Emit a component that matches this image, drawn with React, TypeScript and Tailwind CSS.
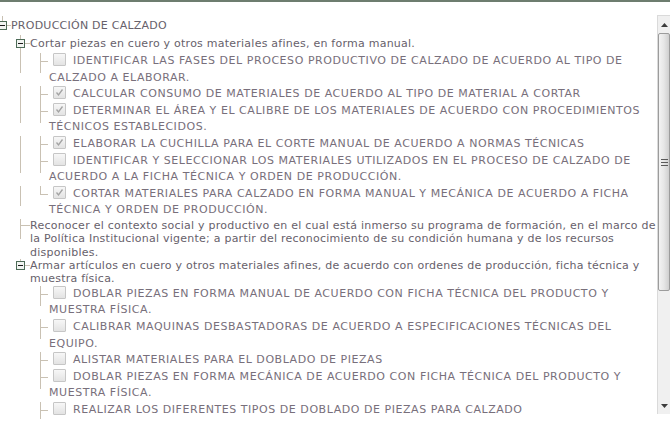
import React from 'react';

const LINE = '#c9c1b3';

type Leaf = { text: string; checked: boolean };

const corteItems: Leaf[] = [
  { text: 'IDENTIFICAR LAS FASES DEL PROCESO PRODUCTIVO DE CALZADO DE ACUERDO AL TIPO DE CALZADO A ELABORAR.', checked: false },
  { text: 'CALCULAR CONSUMO DE MATERIALES DE ACUERDO AL TIPO DE MATERIAL A CORTAR', checked: true },
  { text: 'DETERMINAR EL ÁREA Y EL CALIBRE DE LOS MATERIALES DE ACUERDO CON PROCEDIMIENTOS TÉCNICOS ESTABLECIDOS.', checked: true },
  { text: 'ELABORAR LA CUCHILLA PARA EL CORTE MANUAL DE ACUERDO A NORMAS TÉCNICAS', checked: true },
  { text: 'IDENTIFICAR Y SELECCIONAR LOS MATERIALES UTILIZADOS EN EL PROCESO DE CALZADO DE ACUERDO A LA FICHA TÉCNICA Y ORDEN DE PRODUCCIÓN.', checked: false },
  { text: 'CORTAR MATERIALES PARA CALZADO EN FORMA MANUAL Y MECÁNICA DE ACUERDO A FICHA TÉCNICA Y ORDEN DE PRODUCCIÓN.', checked: true },
];

const armarItems: Leaf[] = [
  { text: 'DOBLAR PIEZAS EN FORMA MANUAL DE ACUERDO CON FICHA TÉCNICA DEL PRODUCTO Y MUESTRA FÍSICA.', checked: false },
  { text: 'CALIBRAR MAQUINAS DESBASTADORAS DE ACUERDO A ESPECIFICACIONES TÉCNICAS DEL EQUIPO.', checked: false },
  { text: 'ALISTAR MATERIALES PARA EL DOBLADO DE PIEZAS', checked: false },
  { text: 'DOBLAR PIEZAS EN FORMA MECÁNICA DE ACUERDO CON FICHA TÉCNICA DEL PRODUCTO Y MUESTRA FÍSICA.', checked: false },
  { text: 'REALIZAR LOS DIFERENTES TIPOS DE DOBLADO DE PIEZAS PARA CALZADO', checked: false },
];

const MinusBox = ({ x, y }: { x: number; y: number }) => (
  <g>
    <rect x={x + 0.5} y={y + 0.5} width="8" height="8" fill="#f1f4f1" stroke="#4d6b57" />
    <line x1={x + 2} y1={y + 4.5} x2={x + 7} y2={y + 4.5} stroke="#1a1a1a" />
  </g>
);

const Checkbox = ({ checked }: { checked: boolean }) => (
  <span className="inline-block w-[13px] h-[13px] ml-[4px] mr-[3px] align-[-2px] border border-[#c6c6c6] rounded-[1px] bg-linear-to-b from-[#f7f7f7] to-[#e3e3e3]">
    {checked && (
      <svg width="11" height="11" viewBox="0 0 11 11" className="block">
        <path d="M2.5 5.5 L4.5 8 L8.5 2.5" fill="none" stroke="#a3a3a3" strokeWidth="1.3" />
      </svg>
    )}
  </span>
);

const LeafRow = ({ item, last, parentHasNext }: { item: Leaf; last: boolean; parentHasNext: boolean }) => (
  <div className="flex items-start">
    <div className="w-[49px] h-0 shrink-0 overflow-visible">
      <svg width="49" height="20" className="block" shapeRendering="crispEdges">
        {parentHasNext && <line x1="20.5" y1="0" x2="20.5" y2="20" stroke={LINE} />}
        <line x1="40.5" y1="0" x2="40.5" y2={last ? 9 : 20} stroke={LINE} />
        <line x1="40" y1="8.5" x2="48" y2="8.5" stroke={LINE} />
      </svg>
    </div>
    <div className="flex-1 leading-[16.6px] tracking-[0.55px] text-[#786f7b]">
      <Checkbox checked={item.checked} /> {item.text}
    </div>
  </div>
);

const Scrollbar = () => (
  <div className="w-[13px] mt-[13px] h-[399px] shrink-0 flex flex-col bg-[#f0f0f0] border-l border-t border-[#dadada]">
    <div className="h-[17px] flex items-center justify-center">
      <svg width="7" height="4" viewBox="0 0 7 4">
        <path d="M0 4 L3.5 0 L7 4 Z" fill="#3c3c3c" />
      </svg>
    </div>
    <div className="h-[258px] border border-[#9c9c9c] rounded-[2px] bg-linear-to-r from-[#f3f3f3] via-[#e6e6e6] to-[#cfcfcf] flex items-center justify-center">
      <svg width="7" height="7" viewBox="0 0 7 7">
        <line x1="0" y1="0.5" x2="7" y2="0.5" stroke="#5a5a5a" />
        <line x1="0" y1="3.5" x2="7" y2="3.5" stroke="#5a5a5a" />
        <line x1="0" y1="6.5" x2="7" y2="6.5" stroke="#5a5a5a" />
      </svg>
    </div>
    <div className="flex-1" />
    <div className="h-[17px] flex items-center justify-center">
      <svg width="7" height="4" viewBox="0 0 7 4">
        <path d="M0 0 L3.5 4 L7 0 Z" fill="#3c3c3c" />
      </svg>
    </div>
  </div>
);

export default function App() {
  return (
    <div className="w-[670px] h-[426px] overflow-hidden bg-white font-['DejaVu_Sans',Verdana,sans-serif] text-[11px] text-[#67616b]">
      <div className="h-[2px] bg-[#6d7d6f]" />
      <div className="flex">
        <div className="flex-1 h-[417px] overflow-hidden pt-[14px] tracking-[0.24px]">
          {/* root */}
          <div className="flex items-start h-[19px]">
            <svg width="11" height="19" className="block shrink-0" shapeRendering="crispEdges">
              <line x1="2.5" y1="0" x2="2.5" y2="5" stroke={LINE} />
              <MinusBox x={-2} y={5} />
              <line x1="7" y1="9.5" x2="11" y2="9.5" stroke={LINE} />
            </svg>
            <span className="leading-[19px]">PRODUCCIÓN DE CALZADO</span>
          </div>

          {/* Cortar piezas */}
          <div className="flex items-start h-[18px]">
            <svg width="30" height="18" className="block shrink-0" shapeRendering="crispEdges">
              <line x1="20.5" y1="0" x2="20.5" y2="4" stroke={LINE} />
              <MinusBox x={16} y={4} />
              <line x1="20.5" y1="13" x2="20.5" y2="18" stroke={LINE} />
              <line x1="25" y1="8.5" x2="30" y2="8.5" stroke={LINE} />
            </svg>
            <span className="leading-[18px]">Cortar piezas en cuero y otros materiales afines, en forma manual.</span>
          </div>
          {corteItems.map((item, i) => (
            <LeafRow key={i} item={item} last={i === corteItems.length - 1} parentHasNext />
          ))}

          {/* Reconocer */}
          <div className="flex items-start">
            <div className="w-[30px] h-0 shrink-0 overflow-visible">
              <svg width="30" height="20" className="block" shapeRendering="crispEdges">
                <line x1="20.5" y1="0" x2="20.5" y2="20" stroke={LINE} />
                <line x1="21" y1="6.5" x2="30" y2="6.5" stroke={LINE} />
              </svg>
            </div>
            <div className="flex-1 leading-[13.3px]">
              Reconocer el contexto social y productivo en el cual está inmerso su programa de formación, en el marco de la Política Institucional vigente; a partir del reconocimiento de su condición humana y de los recursos disponibles.
            </div>
          </div>

          {/* Armar */}
          <div className="flex items-start">
            <div className="w-[30px] h-0 shrink-0 overflow-visible">
              <svg width="30" height="14" className="block" shapeRendering="crispEdges">
                <line x1="20.5" y1="0" x2="20.5" y2="2" stroke={LINE} />
                <MinusBox x={16} y={2} />
                <line x1="25" y1="6.5" x2="30" y2="6.5" stroke={LINE} />
              </svg>
            </div>
            <div className="flex-1 leading-[13.5px]">
              Armar artículos en cuero y otros materiales afines, de acuerdo con ordenes de producción, ficha técnica y muestra física.
            </div>
          </div>
          {armarItems.map((item, i) => (
            <LeafRow key={i} item={item} last={false} parentHasNext={false} />
          ))}
        </div>
        <Scrollbar />
      </div>
    </div>
  );
}
